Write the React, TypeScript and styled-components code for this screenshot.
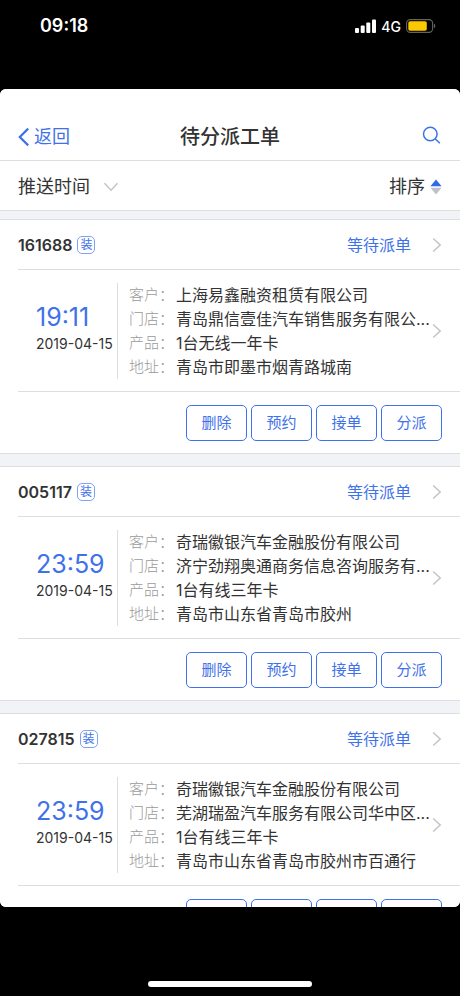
import React from "react";
import styled, { createGlobalStyle } from "styled-components";

const BLUE = "#3f72ea";
const LINE = "#dcdee0";
const INK = "#333333";

const GlobalStyle = createGlobalStyle`
  * { box-sizing: border-box; }
  body {
    margin: 0;
    background: #000;
    color: ${INK};
    font-family: Inter, "Noto Sans CJK SC", sans-serif;
  }
  button, a { font-family: inherit; }
`;

const Screen = styled.div`
  display: flex;
  flex-direction: column;
  height: 100vh;
  background: #000;
`;

const StatusBar = styled.div`
  flex: none;
  display: flex;
  align-items: flex-start;
  justify-content: space-between;
  height: 89px;
  padding: 14px 24px 0 40px;
  color: #fff;
`;

const Clock = styled.span`
  font-size: 18px;
  font-weight: 600;
  line-height: 24px;
`;

const Signals = styled.div`
  display: flex;
  align-items: center;
  gap: 5px;
  height: 24px;
  font-size: 14px;
  font-weight: 500;
`;

const AppWindow = styled.main`
  flex: 1;
  min-height: 0;
  display: flex;
  flex-direction: column;
  overflow: hidden;
  border-radius: 6px;
  background: #f1f3f7;
`;

const NavBar = styled.header`
  flex: none;
  display: grid;
  grid-template-columns: 1fr auto 1fr;
  align-items: center;
  padding: 24px 18px 0;
  height: 72px;
  background: #fff;
  border-bottom: 1px solid ${LINE};
`;

const BackLink = styled.a`
  display: flex;
  align-items: center;
  gap: 4px;
  color: ${BLUE};
  font-size: 18px;
  line-height: 24px;
  text-decoration: none;
`;

const Title = styled.h1`
  margin: 0;
  font-size: 20px;
  line-height: 24px;
  font-weight: 500;
`;

const PlainButton = styled.button`
  display: flex;
  align-items: center;
  padding: 0;
  border: 0;
  background: none;
  color: inherit;
  cursor: pointer;
`;

const SearchButton = styled(PlainButton)`
  justify-self: end;
  padding-bottom: 4px;
`;

const FilterBar = styled.div`
  flex: none;
  display: flex;
  align-items: center;
  justify-content: space-between;
  height: 50px;
  padding: 2px 18px 0;
  background: #fff;
  border-bottom: 1px solid ${LINE};
`;

const FilterButton = styled(PlainButton)<{ $gap: number }>`
  gap: ${(p) => p.$gap}px;
  font-size: 18px;
  line-height: 24px;
`;

const OrderList = styled.div`
  flex: 1;
  min-height: 0;
  display: flex;
  flex-direction: column;
  gap: 12px;
  padding-top: 8px;
  overflow-y: auto;
  scrollbar-width: none;
`;

const Card = styled.article`
  flex: none;
  padding-left: 18px;
  background: #fff;
  border-top: 1px solid ${LINE};
  border-bottom: 1px solid ${LINE};
`;

const CardHead = styled.div`
  display: flex;
  align-items: center;
  height: 50px;
  padding: 1px 18px 0 0;
  border-bottom: 1px solid ${LINE};
`;

const OrderNumber = styled.h2`
  margin: 0;
  font-size: 16px;
  line-height: 24px;
  font-weight: 600;
`;

const Tag = styled.span`
  display: flex;
  align-items: center;
  justify-content: center;
  width: 18px;
  height: 18px;
  margin-left: 5px;
  border: 1px solid #7fa2f2;
  border-radius: 5px;
  color: ${BLUE};
  font-size: 12px;
  line-height: 16px;
`;

const StatusLink = styled.a`
  display: flex;
  align-items: center;
  gap: 21px;
  margin-left: auto;
  color: ${BLUE};
  font-size: 16px;
  line-height: 24px;
  text-decoration: none;
`;

const CardBody = styled.div`
  display: flex;
  align-items: center;
  padding: 13px 18px 12px 0;
  border-bottom: 1px solid ${LINE};
`;

const When = styled.div`
  flex: none;
  width: 99px;
  padding: 0 0 6px 18px;
  white-space: nowrap;
`;

const Time = styled.div`
  color: ${BLUE};
  font-size: 25px;
  line-height: 32px;
`;

const DateText = styled.div`
  font-size: 14px;
  line-height: 22px;
`;

const Details = styled.dl`
  flex: 1;
  min-width: 0;
  margin: 0;
  padding-left: 11px;
  border-left: 1px solid ${LINE};
`;

const DetailRow = styled.div`
  display: flex;
  font-size: 16px;
  line-height: 24px;
`;

const Label = styled.dt`
  flex: none;
  width: 47px;
  color: #9a9a9a;
  font-size: 15px;
  font-weight: 300;
`;

const Value = styled.dd`
  flex: 1;
  min-width: 0;
  margin: 0;
  white-space: nowrap;
  overflow: hidden;
  text-overflow: ellipsis;
`;

const Actions = styled.div`
  display: flex;
  justify-content: flex-end;
  gap: 4px;
  padding: 13px 18px 12px 0;
`;

const ActionButton = styled.button`
  width: 61px;
  height: 36px;
  padding: 0;
  border: 1px solid ${BLUE};
  border-radius: 5px;
  background: #fff;
  color: ${BLUE};
  font-size: 15px;
  line-height: 24px;
  cursor: pointer;
`;

const HomeArea = styled.div`
  flex: none;
  display: flex;
  align-items: flex-end;
  justify-content: center;
  height: 89px;
  padding-bottom: 9px;
`;

const HomeIndicator = styled.div`
  width: 164px;
  height: 6px;
  border-radius: 3px;
  background: #fff;
`;

const Chevron = () => (
  <svg width="10" height="16" viewBox="0 0 10 16" fill="none" stroke="#c4c4c8" strokeWidth="1.5" aria-hidden="true">
    <path d="M1.2 1.5 8.2 8l-7 6.5" />
  </svg>
);

type Order = {
  id: string;
  time: string;
  date: string;
  details: [string, string][];
};

const orders: Order[] = [
  {
    id: "161688",
    time: "19:11",
    date: "2019-04-15",
    details: [
      ["客户", "上海易鑫融资租赁有限公司"],
      ["门店", "青岛鼎信壹佳汽车销售服务有限公..."],
      ["产品", "1台无线一年卡"],
      ["地址", "青岛市即墨市烟青路城南"],
    ],
  },
  {
    id: "005117",
    time: "23:59",
    date: "2019-04-15",
    details: [
      ["客户", "奇瑞徽银汽车金融股份有限公司"],
      ["门店", "济宁劲翔奥通商务信息咨询服务有..."],
      ["产品", "1台有线三年卡"],
      ["地址", "青岛市山东省青岛市胶州"],
    ],
  },
  {
    id: "027815",
    time: "23:59",
    date: "2019-04-15",
    details: [
      ["客户", "奇瑞徽银汽车金融股份有限公司"],
      ["门店", "芜湖瑞盈汽车服务有限公司华中区..."],
      ["产品", "1台有线三年卡"],
      ["地址", "青岛市山东省青岛市胶州市百通行"],
    ],
  },
];

const actions = ["删除", "预约", "接单", "分派"];

const OrderCard = ({ order }: { order: Order }) => (
  <Card>
    <CardHead>
      <OrderNumber>{order.id}</OrderNumber>
      <Tag>装</Tag>
      <StatusLink href="#">
        等待派单
        <Chevron />
      </StatusLink>
    </CardHead>
    <CardBody>
      <When>
        <Time>{order.time}</Time>
        <DateText>{order.date}</DateText>
      </When>
      <Details>
        {order.details.map(([label, value]) => (
          <DetailRow key={label}>
            <Label>{label}：</Label>
            <Value>{value}</Value>
          </DetailRow>
        ))}
      </Details>
      <Chevron />
    </CardBody>
    <Actions>
      {actions.map((name) => (
        <ActionButton key={name} type="button">
          {name}
        </ActionButton>
      ))}
    </Actions>
  </Card>
);

export default function App() {
  return (
    <>
      <GlobalStyle />
      <Screen>
        <StatusBar>
          <Clock>09:18</Clock>
          <Signals>
            <svg width="21" height="14" viewBox="0 0 21 14" fill="#fff" aria-hidden="true">
              <rect x="0" y="9" width="4" height="5" rx="1" />
              <rect x="5.7" y="6.5" width="4" height="7.5" rx="1" />
              <rect x="11.3" y="3.5" width="4" height="10.5" rx="1" />
              <rect x="17" y="0.5" width="4" height="13.5" rx="1" />
            </svg>
            4G
            <svg width="30" height="14" viewBox="0 0 30 14" aria-hidden="true">
              <rect x="0.6" y="0.6" width="26" height="12.8" rx="3.6" fill="none" stroke="#66625c" strokeWidth="1.1" />
              <rect x="2.3" y="2.3" width="18.5" height="9.4" rx="1.8" fill="#fdc800" />
              <path d="M27.9 4.8c1.8.6 1.8 3.8 0 4.4z" fill="#66625c" />
            </svg>
          </Signals>
        </StatusBar>
        <AppWindow>
          <NavBar>
            <BackLink href="#">
              <svg width="12" height="20" viewBox="0 0 12 20" fill="none" stroke={BLUE} strokeWidth="2.2" aria-hidden="true">
                <path d="M10.2 1.6 1.8 10l8.4 8.4" />
              </svg>
              返回
            </BackLink>
            <Title>待分派工单</Title>
            <SearchButton type="button" aria-label="搜索">
              <svg width="20" height="18" viewBox="0 0 20 18" fill="none" stroke={BLUE} strokeWidth="1.5" aria-hidden="true">
                <circle cx="8.3" cy="8" r="6.8" />
                <path d="m13.1 12.8 4.8 4.4" />
              </svg>
            </SearchButton>
          </NavBar>
          <FilterBar>
            <FilterButton type="button" $gap={13}>
              推送时间
              <svg width="16" height="10" viewBox="0 0 16 10" fill="none" stroke="#c4c4c8" strokeWidth="1.5" aria-hidden="true">
                <path d="m1.5 1.2 6.5 7 6.5-7" />
              </svg>
            </FilterButton>
            <FilterButton type="button" $gap={5}>
              排序
              <svg width="12" height="16" viewBox="0 0 12 16" aria-hidden="true">
                <path d="M6 0.5 11.6 7.2H0.4z" fill="#2f68ee" />
                <path d="M6 15.5 11.6 8.8H0.4z" fill="#c0c1c8" />
              </svg>
            </FilterButton>
          </FilterBar>
          <OrderList>
            {orders.map((order) => (
              <OrderCard key={order.id} order={order} />
            ))}
          </OrderList>
        </AppWindow>
        <HomeArea>
          <HomeIndicator />
        </HomeArea>
      </Screen>
    </>
  );
}
